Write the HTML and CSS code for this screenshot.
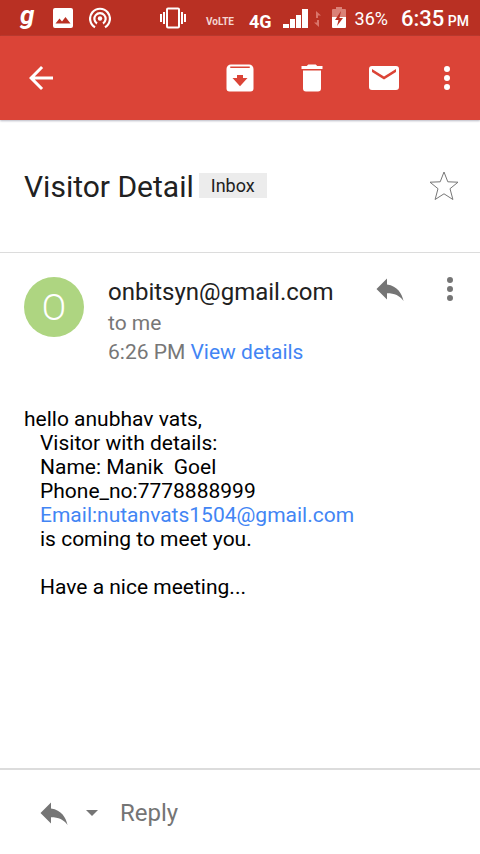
FILE: index.html
```html
<!DOCTYPE html>
<html lang="en">
<head>
<meta charset="utf-8">
<meta name="viewport" content="width=device-width, initial-scale=1">
<title>Visitor Detail</title>
<link rel="stylesheet" href="styles.css">
</head>
<body>
<div class="status">
  <div class="status-left">
    <span class="g-logo">g</span>
    <svg width="20" height="20" viewBox="0 0 20 20"><path fill="#fff" fill-rule="evenodd" d="M2 0h16a2 2 0 0 1 2 2v16a2 2 0 0 1-2 2H2a2 2 0 0 1-2-2V2a2 2 0 0 1 2-2zM2.500 15.500h15l-5-6.500-3.500 4.500-2.500-3z"/></svg>
    <svg width="22" height="22" viewBox="0 0 22 22" fill="none" stroke="#fff" stroke-width="2.200"><circle cx="11" cy="11.500" r="2.200" fill="#fff" stroke="none"/><path d="M8 16.500a5.600 5.600 0 1 1 6 0M6 20.200a9.900 9.900 0 1 1 10 0"/></svg>
  </div>
  <div class="status-right">
    <svg width="28" height="22" viewBox="0 0 28 22" fill="none" stroke="#fff" stroke-width="2"><rect x="8" y="1.500" width="12" height="19" rx="1"/><path d="M5 5v12M2 7v8M23 5v12M26 7v8"/></svg>
    <span class="volte">VoLTE</span>
    <span class="net">4G</span>
    <svg width="38" height="22" viewBox="0 0 38 22"><path fill="#fff" d="M0 17h6v4H0zM7 12h5v9H7zM13 8h5v13h-5zM19 2h6v19h-6z"/><path fill="#d9756b" d="M33 4l5 4.500h-3v2.500h-2zM36 20l-5-4.500h3V13h2z"/></svg>
    <svg width="14" height="22" viewBox="0 0 14 22"><path fill="#da8177" d="M4 0h6v2h3a1 1 0 0 1 1 1v7H0V3a1 1 0 0 1 1-1h3z"/><path fill="#fff" d="M0 10h14v10a1 1 0 0 1-1 1H1a1 1 0 0 1-1-1z"/><path fill="#b93023" d="M9 4l-6 9h3.500L5 19l6-8H7.500z"/></svg>
    <span class="percent">36%</span>
    <span class="clock">6:35 <small>PM</small></span>
  </div>
</div>

<header class="toolbar">
  <button class="tool" aria-label="Back"><svg class="icon" viewBox="0 0 24 24"><path d="M20 11H7.830l5.590-5.590L12 4l-8 8 8 8 1.410-1.410L7.830 13H20v-2z"/></svg></button>
  <div class="tools">
    <button class="tool" aria-label="Archive"><svg class="icon" viewBox="0 0 24 24"><path fill-rule="evenodd" d="M6 3h12a3 3 0 0 1 3 3v13a2 2 0 0 1-2 2H5a2 2 0 0 1-2-2V6a3 3 0 0 1 3-3zM5.500 4.400v1h13v-1zM12 17.500l5-5.500h-3v-2h-4v2H7z"/></svg></button>
    <button class="tool" aria-label="Delete"><svg class="icon" viewBox="0 0 24 24"><path d="M6 19a2 2 0 0 0 2 2h8a2 2 0 0 0 2-2V7H6zM19 4h-3.500l-1-1h-5l-1 1H5v2h14z"/></svg></button>
    <button class="tool" aria-label="Mark unread"><svg class="icon" viewBox="0 0 24 24"><path fill-rule="evenodd" d="M20 4H4a2 2 0 0 0-2 2v12a2 2 0 0 0 2 2h16a2 2 0 0 0 2-2V6a2 2 0 0 0-2-2zm0 4l-8 5-8-5V6l8 5 8-5z"/></svg></button>
    <button class="tool tool-more" aria-label="More options"><svg class="icon" viewBox="0 0 24 24"><path d="M12 8a2 2 0 1 0 0-4 2 2 0 0 0 0 4zm0 2a2 2 0 1 0 0 4 2 2 0 0 0 0-4zm0 6a2 2 0 1 0 0 4 2 2 0 0 0 0-4z"/></svg></button>
  </div>
</header>

<main>
  <section class="subject">
    <h1>Visitor Detail</h1>
    <span class="label">Inbox</span>
    <button class="star" aria-label="Star"><svg width="32" height="32" viewBox="0 0 32 32" fill="none" stroke="#777"><path d="M16 2l3.800 9.800 10.200.4-8 6.500 2.900 10.800L16 23.800l-8.900 5.700L10 18.700l-8-6.500 10.200-.4z"/></svg></button>
  </section>

  <section class="sender">
    <div class="avatar">O</div>
    <div class="meta">
      <h2>onbitsyn@gmail.com</h2>
      <p>to me</p>
      <p>6:26 PM <a href="#details">View details</a></p>
    </div>
    <div class="sender-actions">
      <button aria-label="Reply to sender"><svg class="icon" viewBox="0 0 24 24"><path d="M10 9V5l-7 7 7 7v-4.100c5 0 8.500 1.600 11 5.100-1-5-4-10-11-11z"/></svg></button>
      <button aria-label="Message options"><svg class="icon" viewBox="0 0 24 24"><path d="M12 8a2 2 0 1 0 0-4 2 2 0 0 0 0 4zm0 2a2 2 0 1 0 0 4 2 2 0 0 0 0-4zm0 6a2 2 0 1 0 0 4 2 2 0 0 0 0-4z"/></svg></button>
    </div>
  </section>

  <article class="message">
    <p>hello anubhav vats,</p>
    <div class="indent">
      <p>Visitor with details:</p>
      <p>Name: Manik&nbsp; Goel</p>
      <p>Phone_no:7778888999</p>
      <p><a href="mailto:nutanvats1504@gmail.com">Email:nutanvats1504@gmail.com</a></p>
      <p>is coming to meet you.</p>
      <p class="closing">Have a nice meeting...</p>
    </div>
  </article>
</main>

<footer class="reply">
  <button class="reply-mode" aria-label="Reply mode">
    <svg class="icon" viewBox="0 0 24 24"><path d="M10 9V5l-7 7 7 7v-4.100c5 0 8.500 1.600 11 5.100-1-5-4-10-11-11z"/></svg>
    <svg width="12" height="6" viewBox="0 0 12 6"><path d="M0 0h12L6 6z"/></svg>
  </button>
  <button class="reply-text">Reply</button>
</footer>
</body>
</html>
```
FILE: styles.css
```css
* {
  box-sizing: border-box;
  margin: 0;
  padding: 0;
}

body {
  display: flex;
  flex-direction: column;
  min-height: 100vh;
  background: #fff;
  color: #212121;
  font-family: Roboto, "Liberation Sans", sans-serif;
}

button {
  border: 0;
  background: none;
  color: inherit;
  font: inherit;
}

svg {
  display: block;
  flex: none;
}

a {
  color: #4285f4;
  text-decoration: none;
}

.icon {
  width: 36px;
  height: 36px;
  fill: currentColor;
}

.status {
  display: flex;
  justify-content: space-between;
  height: 36px;
  padding: 0 11px 0 20px;
  background: #b93023;
  color: #fff;
}

.status-left,
.status-right {
  display: flex;
  align-items: center;
}

.status-left {
  gap: 16px;
}

.g-logo {
  width: 17px;
  padding-bottom: 6px;
  font-size: 26px;
  font-style: italic;
  font-weight: 700;
  line-height: 28px;
}

.status-right {
  gap: 11px;
}

.volte {
  margin: 7px 4px 0 8px;
  font-size: 10px;
  font-weight: 700;
  line-height: 14px;
  color: #f4d5d1;
}

.net {
  margin-top: 8px;
  font-size: 18px;
  font-weight: 700;
  line-height: 20px;
}

.percent {
  margin: 0 2px 0 -2px;
  font-size: 18px;
}

.clock {
  font-size: 22px;
  font-weight: 500;
}

.clock small {
  margin-left: -2px;
  font-size: 14px;
}

.toolbar {
  display: flex;
  align-items: center;
  justify-content: space-between;
  height: 84px;
  padding: 0 6px 0 5px;
  background: #db4437;
  color: #fff;
  box-shadow: 0 1px 2px #b9b9c4;
}

.tools {
  display: flex;
}

.tool {
  display: flex;
  align-items: center;
  justify-content: center;
  width: 72px;
  height: 72px;
}

.tool-more {
  width: 54px;
}

.subject {
  display: flex;
  align-items: center;
  height: 133px;
  padding: 0 20px 0 24px;
  border-bottom: 1px solid #dcdcdc;
}

h1 {
  padding-top: 2px;
  font-size: 30px;
  font-weight: 400;
  line-height: 36px;
}

.label {
  margin: 0 0 2px 5px;
  padding: 0 12px;
  background: #ececec;
  font-size: 18px;
  line-height: 25px;
}

.star {
  margin-left: auto;
}

.sender {
  display: flex;
  padding: 24px 12px 0 24px;
}

.avatar {
  flex: none;
  width: 60px;
  height: 60px;
  margin-right: 24px;
  border-radius: 50%;
  background: #aed581;
  color: #fff;
  font-size: 36px;
  font-weight: 300;
  line-height: 62px;
  text-align: center;
}

.meta {
  flex: 1;
  padding-top: 1px;
  color: #777;
  font-size: 21px;
  line-height: 29px;
}

h2 {
  margin-bottom: 2px;
  color: #212121;
  font-size: 24px;
  font-weight: 400;
  line-height: 29px;
}

.sender-actions {
  display: flex;
  align-items: flex-start;
  gap: 24px;
  margin-top: -6px;
  color: #757575;
}

.message {
  padding: 40px 24px 24px;
  color: #000;
  font-size: 21px;
  line-height: 24px;
}

.indent {
  padding-left: 16px;
}

.closing {
  margin-top: 24px;
}

.reply {
  display: flex;
  align-items: center;
  height: 86px;
  margin-top: auto;
  padding: 2px 36px 0;
  border-top: 2px solid #dcdcdc;
  color: #757575;
}

.reply-mode {
  display: flex;
  align-items: center;
  gap: 14px;
  fill: #757575;
}

.reply-text {
  margin-left: 22px;
  font-size: 24px;
}
```
